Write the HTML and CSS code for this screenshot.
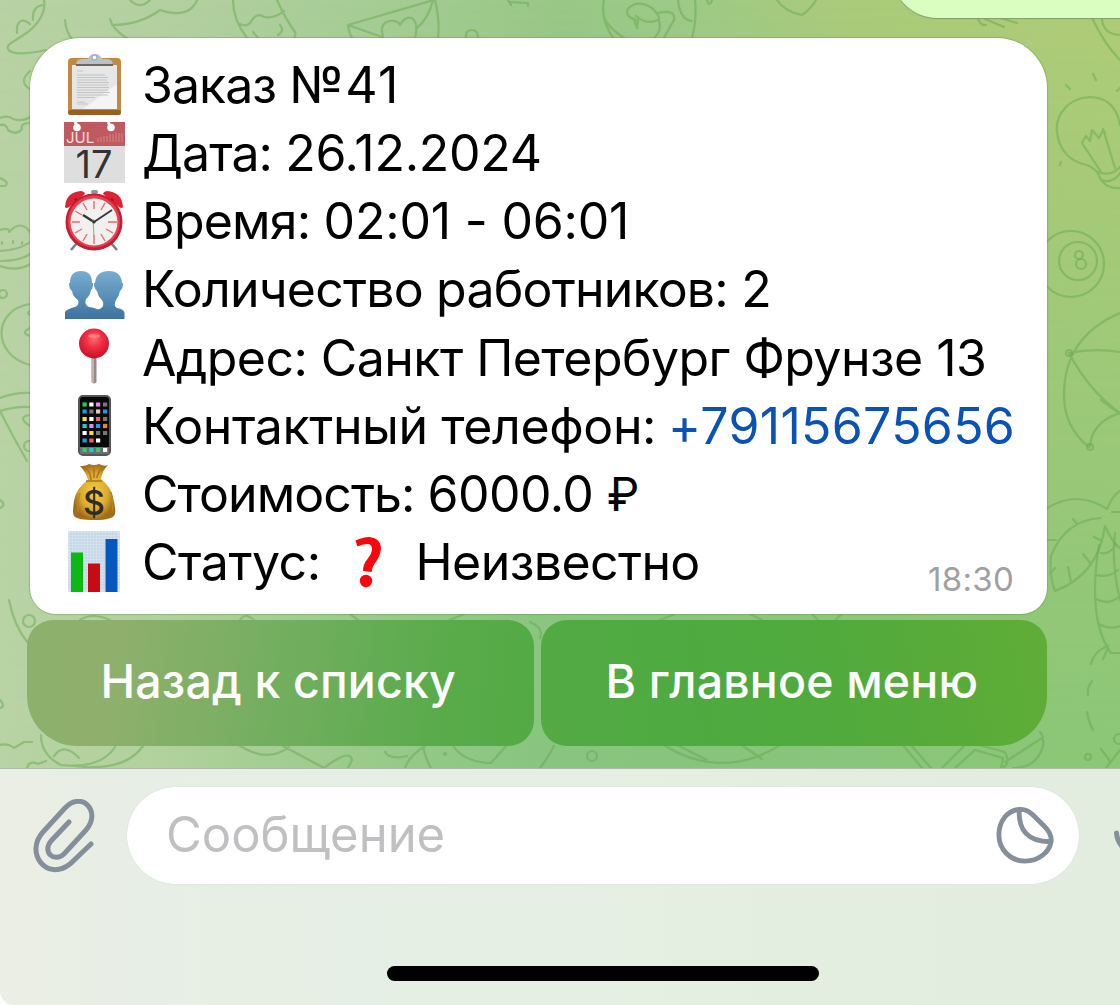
FILE: index.html
```
<!DOCTYPE html>
<html lang="ru">
<head>
<meta charset="utf-8">
<title>Заказ №41</title>
<link rel="stylesheet" href="styles.css">
</head>
<body>
<div class="app">
  <main class="chat">
    <svg class="pattern" viewBox="0 0 1120 768" aria-hidden="true">
      <!-- top edge -->
      <path d="M44 0C46 12 40 22 28 32C14 42 6 44 8 49C11 55 28 54 46 50M43 5q-11 1-10 15M30 24q-10-8-13 3v6M65 20q1 12 7 19M110 19q2 10 18 20M112 25q28 0 48-15q30 10 38-12M130 0q10 10 20 0"/>
      <path d="M233 0q0 20 14 38M277 0q8 18 18 32q1 4-1 6M240 24q8 4 12-4q6-8 12-3q10 2 20-6M280 25q5 6-2 10M253 32l6 7"/>
      <path d="M434 0L348 25L382 37M348 25q1 8 4 13M433 0q-4 18-17 29M435 0q5 20 3 38M383 37q-4-14 7-16q8-1 10 4q5-9 12-7q7 6 3 20M466 38q-1-8 6-8q6 0 6 8M508 0l3 5M510 2l18 1v3"/>
      <path d="M604 0q-4 18 9 38M604 18q5 10 20 20M636 20q-12-4-8-11q8-10 24-1q12 12 3 13q-10 3-19-5M634 20l3 8 1-8M658 13q18-4 16 7q-6 10-10 18M654 38q8-7 5-17M695 0q2 20-3 38M678 0q2 20 14 21M707 0q2 8 5 0M777 0q8 12 25 15q8-5 14-15M978 19q3 7 8 6M985 19l19 8M1000 18l17 5"/>
      <!-- right edge -->
      <path d="M1092 18Q1105 45 1120 60M1102 19q1 15 18 16M1066 85l4 4M1093 74l3 6M1061 162l-1 3M1117 91l3-3"/>
      <path d="M1120 125C1117 106 1105 97 1090 97C1068 98 1055 115 1057 132C1059 150 1070 162 1087 165Q1097 169 1100 178Q1106 189 1120 188M1101 172L1082 143L1086 136L1090 141L1092 130L1099 138L1103 130L1105 134L1103 129L1115 168M1098 172q13 5 22-5M1101 180q12 4 19-7"/>
      <circle cx="1071" cy="264" r="33"/><circle cx="1078" cy="261" r="19"/><circle cx="1079" cy="255" r="4"/><circle cx="1081" cy="264" r="5"/>
      <path d="M1120 313C1080 330 1064 360 1064 395C1064 420 1075 436 1089 447M1069 353q25-5 51-1M1069 353q20 38 51 60M1090 446q2-24 30-33M1101 400l19 14"/>
      <circle cx="1069" cy="353" r="3"/><circle cx="1090" cy="447" r="3"/>
      <path d="M1046 509q30-20 61 0q6-14 13-18M1101 518q-36 2-50 38q-2 20 4 35q43-16 50-65q8 18 15 22M1112 512h8M1046 540h10M1073 519l4 5M1094 537l8 4M1083 554l8 10M1068 567l3 15M1055 568l-5 6"/>
      <path d="M1099 545q-12 75 12 108h9M1115 533q-4 30 5 67M1101 553q9 2 15-9M1096 575q13 3 22-5M1096 599q12 7 24-3M1099 624q10 6 21 2M1108 646q-14 5-17 18M1108 648l-5 11M1092 681q-5 6-4 14M1087 712q1 8 6 18M1101 749l9 12M1120 750l-14 18"/>
      <circle cx="1088" cy="757" r="3"/><circle cx="1119" cy="739" r="5"/>
      <!-- left edge -->
      <path d="M30 71q-12 11 0 18M0 118q9-3 13 1q10 3 17-2M0 125q6-2 8 5q8 6 14-1q-2-6 8-6M0 178q10 4 5 8h-5M0 230q10-3 9 2q12-13 21 0M2 242v2M13 241v2M22 242v2M0 251q20-1 30-9M0 261q20 0 30-7M0 266q18 6 30-2M30 304C-8 310-8 355 30 365M30 311q-4 2 0 4M30 328q-10 5 0 8M0 398q16-6 30-5M0 411q16-5 30-4M0 411q12 24 27 50M30 415q-14 2 0 11M0 500q7 5 0 8"/>
      <circle cx="3" cy="294" r="4"/><circle cx="29" cy="446" r="5"/>
      <path d="M9 600q5 26 19 43M0 700q6 7 0 8M0 745q8-2 14 3l10-6h8M27 768q2-8 11-4l8-3M41 735q0 20 20 30q40 4 54-18M54 756q10-14 25 2M75 766q50 6 68-20"/>
      <circle cx="29" cy="621" r="6"/>
      <!-- bottom strip -->
      <path d="M237 744q30 20 52 3M283 746l41 22q26-20 28-8q-2 4-4 8M385 752q5 8 22 4M405 768q4-12 20-22M423 746q2 12 8 22M452 744q10 18 39 19l16-18M540 768q8-10 14-22M662 744q60 38 120 0M675 744l32 16M740 744l22 15M902 744l20 24M910 744l21 24M942 768l24-24M955 768l20-18 28 8-2 10M975 744l30 8q6 12-3 16M1040 732q4 4 3 14q-6 22-30 22M1005 762l37-24"/>
      <circle cx="592" cy="756" r="5"/><circle cx="445" cy="754" r="1"/>
      <path d="M80 620q12-8 30 0M240 620q5-8 14 0M350 614l8 6M450 620l14-6M530 622q14 6 10 16M660 620l15-6M750 614l12 6M812 614l6 6M835 620l6-5"/>
    </svg>

    <div class="outgoing"></div>

    <section class="message">
      <div class="row">
        <svg class="emoji" viewBox="0 0 62 62">
          <rect x="5" y="4" width="53" height="57" rx="4" fill="#c28a3e"/><rect x="5" y="56" width="53" height="5" rx="2.500" fill="#966021"/>
          <rect x="9" y="11" width="45" height="44" fill="#e6e6e6"/><path d="M20 55h34V30z" fill="#f4f4f4"/>
          <path d="M14 17h6M14 21h28M14 23.500h31M14 26h30M14 28.500h32M14 31h31M14 33.500h32M14 36h31M14 38.500h33M14 41h31M14 43.500h18M14 48h8M14 50h11" stroke="#c4c4c4" stroke-width="1"/>
          <path d="M13 11q0-6 6-6h6q2-5 7-5t7 5h5q6 0 6 6z" fill="#bcc0c6"/><path d="M13 10h37v2H13z" fill="#6c6763"/><circle cx="31.500" cy="3.500" r="2.500" fill="#fff" stroke="#9fb0c4" stroke-width="1.500"/>
        </svg>
        <span class="line w1">Заказ </span><span class="line w2">№41</span>
      </div>
      <div class="row">
        <svg class="emoji" viewBox="0 0 62 62">
          <path d="M1 0h61v61H1z" fill="#dedede"/><path d="M1 0h61v24H1z" fill="#bf5a60"/>
          <circle cx="14" cy="5.500" r="3.800" fill="#fff"/><circle cx="48" cy="5.500" r="3.800" fill="#fff"/><path d="M12 0l3 5M45 0l3 5" stroke="#fff" stroke-width="3"/>
          <path d="M35 20v-4M38 20v-5M41 20v-6M44 20v-6M47 20v-8M50 20v-8M53 20v-9M56 20v-9M59 20v-9" stroke="#d5868a"/>
          <text x="3" y="20.500" class="cal-month">JUL</text><text x="31" y="55.500" class="cal-day">17</text>
        </svg>
        <span class="line w1">Дата: </span><span class="line w3">26.12.2024</span>
      </div>
      <div class="row">
        <svg class="emoji" viewBox="0 0 62 62">
          <path d="M14 53l-6 7M48 53l6 7" stroke="#777f8b" stroke-width="2.500"/>
          <path d="M2 17Q3 2 18 1q4 1 4 3L6 17q-3 2-4 0M60 17Q59 2 44 1q-4 1-4 3l16 13q3 2 4 0" fill="#dc2336"/><path d="M12 9l5 5M50 9l-5 5" stroke="#8d1624" stroke-width="3"/>
          <rect x="28" y="0" width="7" height="4" rx="2" fill="#92969b"/>
          <circle cx="31" cy="32" r="28.500" fill="#c81d30"/><circle cx="31" cy="31.500" r="26" fill="#e54251"/><circle cx="31" cy="32" r="23.500" fill="#f0f0ef"/>
          <path d="M31 11v8M31 45v9M9 32h8M45 32h9M20 13l4 7M42 13l-4 7M12 21l7 4M50 43l-7-4M12 43l7-4M20 51l4-7M42 51l-4-7" stroke="#ed6870" stroke-width="1.400"/>
          <path d="M31 32L20 25" stroke="#30383a" stroke-width="2.500"/><path d="M31 32L49 20" stroke="#30383a" stroke-width="1.800"/><path d="M30 29l1 17" stroke="#b69b70"/><circle cx="31" cy="32" r="1.500" fill="#333"/>
        </svg>
        <span class="line w4">Время: </span><span class="line w5">02:01 - 06:01</span>
      </div>
      <div class="row">
        <svg class="emoji" viewBox="0 0 62 62">
          <defs>
            <linearGradient id="people" x1="0" y1="0" x2="0" y2="1"><stop stop-color="#78aed1"/><stop offset="1" stop-color="#3e729e"/></linearGradient>
          </defs>
          <path d="M32 61L30 53Q39 51 40 48Q41 44 38 41Q35 38 34 33Q31 31 31 25H32Q33 13 46 13Q58 13 59 25H60Q60 31 57 33Q56 38 53 42Q50 48 54 50Q61 51 61.500 55V61Z" fill="url(#people)"/>
          <path d="M2 61V54q2-3 10-5q5-2 3-7q-5-3-6-9q-3-2-3-8h1q0-12 11-12t11 12h1q0 6-2 7q-1 6-5 9q-2 6 3 8q10 1 12 6q1 3 1 6z" fill="url(#people)"/>
        </svg>
        <span class="line w4">Количество работников: 2</span>
      </div>
      <div class="row">
        <svg class="emoji" viewBox="0 0 62 62">
          <defs><radialGradient id="pin" cx=".5" cy=".35" r=".65"><stop stop-color="#ff6a70"/><stop offset=".45" stop-color="#ee2e43"/><stop offset="1" stop-color="#c90e27"/></radialGradient></defs>
          <path d="M28.500 28h5v27q-2.500 3-5 0z" fill="#988783"/><path d="M30 29v27" stroke="#c9c0bc" stroke-width="1.500"/><circle cx="31" cy="16.500" r="15" fill="url(#pin)"/><ellipse cx="31" cy="9" rx="6" ry="2" fill="#ff989b" opacity=".6"/>
        </svg>
        <span class="line w6">Адрес: Санкт Петербург Фрунзе 13</span>
      </div>
      <div class="row">
        <svg class="emoji" viewBox="0 0 62 62">
          <rect x="16" y="1" width="31" height="59" rx="4" fill="#090909" stroke="#555" stroke-width="2"/><path d="M17 52h29v7H17z" fill="#6c6e70"/>
          <g stroke-width="4.200">
            <path d="M19.500 9.500h4.200" stroke="#21cf50"/><path d="M26.300 9.500h4.200M26.300 24h4.200M19.500 38h4.200M33 45.500h4.200M40 55h4.200" stroke="#fff"/>
            <path d="M33 9.500h4.200M26.300 31h4.200" stroke="#e08fe0"/><path d="M40 9.500h4.200M26.300 16.500h4.200M40 24h4.200M33 38h4.200M40 38h4.200" stroke="#777"/>
            <path d="M19.500 16.500h4.200M40 16.500h4.200M33 31h4.200M19.500 45.500h4.200" stroke="#199bea"/><path d="M19.500 31h4.200M26.300 55h4.200" stroke="#21c9d7"/>
            <path d="M19.500 24h4.200M26.300 38h4.200" stroke="#f6dc40"/><path d="M33 16.500h4.200" stroke="#dfc7a6"/><path d="M33 24h4.200M26.300 45.500h4.200" stroke="#f16050"/><path d="M40 31h4.200" stroke="#f0861e"/><path d="M19.500 55h4.200M33 55h4.200" stroke="#34ce60"/>
          </g>
        </svg>
        <span class="line w7">Контактный телефон:</span><a class="line phone">+79115675656</a>
      </div>
      <div class="row">
        <svg class="emoji" viewBox="0 0 62 62">
          <defs><radialGradient id="bag"><stop stop-color="#f4cf48"/><stop offset=".65" stop-color="#dda92e"/><stop offset="1" stop-color="#a16d1b"/></radialGradient></defs>
          <path d="M17 3q6 0 9-2 5 2 10 0 5 3 9 1-6 6-7 14 10 8 12 19 3 10 2 16-2 6-20 6T11 53q-2-2 0-15 2-13 14-21-2-8-8-14" fill="url(#bag)"/>
          <path d="M23 5q5 5 5 12M31 4v11M39 5q-5 6-5 10M23 18h16" stroke="#a8761f" stroke-width="1.500" fill="none"/><path d="M17 30q-3 9-2 19M48 29q3 9 1 19" stroke="#b98523" stroke-width="1.300" fill="none"/>
          <text x="31" y="51.500" class="dollar">$</text>
        </svg>
        <span class="line w1">Стоимость: </span><span class="line w6">6000.0 </span><span class="line ruble">₽</span>
      </div>
      <div class="row">
        <svg class="emoji" viewBox="0 0 62 62">
          <path d="M5 0h52v61H5z" fill="#d8e7f2"/><path d="M8 0v61M11 0v61M14 0v61M17 0v61M20 0v61M23 0v61M26 0v61M29 0v61M32 0v61M35 0v61M38 0v61M41 0v61M44 0v61M47 0v61M50 0v61M53 0v61M5 3h52M5 6h52M5 9h52M5 12h52M5 15h52M5 18h52M5 21h52M5 24h52M5 27h52M5 30h52M5 33h52M5 36h52M5 39h52M5 42h52M5 45h52M5 48h52M5 51h52M5 54h52M5 57h52" stroke="#b9cbdc" stroke-width=".6"/>
          <path d="M8 21.500h12V61H8z" fill="#0bb814"/><path d="M25 32.500h12V61H25z" fill="#c60b12"/><path d="M42.500 8h12v53h-12z" fill="#0758bd"/>
        </svg>
        <span class="line">Статус:</span>
        <svg class="question" viewBox="0 0 28 52"><path d="M1.500 4.500Q9 1 15 1Q27 2 27 13Q26 21 21 27Q18 31 17.500 36L9 35Q9 28 13.500 23Q18 17 18 13Q18 8 13 8Q8 8 3.500 10.500Z" fill="#f8080c"/><circle cx="12" cy="45" r="6.200" fill="#f8080c"/></svg>
        <span class="line w8">Неизвестно</span>
        <time class="time">18:30</time>
      </div>
    </section>

    <div class="keyboard">
      <button class="key key-back"><span>Назад к списку</span></button>
      <button class="key key-menu"><span>В главное меню</span></button>
    </div>
  </main>

  <footer class="panel">
    <div class="composer">
      <svg class="clip" viewBox="0 0 64 74"><path d="M37 23L19 42C10 53 22 64 32 55L54 31C70 13 50-9 33 9L11 33C-8 54 15 83 38 65L59 45"/></svg>
      <div class="field">
        <span class="placeholder">Сообщение</span>
        <svg class="sticker" viewBox="0 0 60 60"><path d="M24 3.500C11 5 3 16 3 30C3 45 15 57 30 57C44 57 55 48 57 37C58 30 54 25 50 21L38 9C34 5 29 3 24 3.500ZM24 4C23 25 33 37 56 37"/></svg>
      </div>
      <svg class="mic" viewBox="0 0 8 40"><path d="M4.500 17Q5 25 12 33"/></svg>
    </div>
    <div class="home"></div>
  </footer>
</div>
</body>
</html>
```
FILE: styles.css
```
* { box-sizing: border-box; }
body { margin: 0; background: #fff; font-family: Inter, "Liberation Sans", sans-serif; }
.app { width: 1120px; height: 1005px; overflow: hidden; display: flex; flex-direction: column; border-bottom-left-radius: 14px; }

.chat {
  position: relative;
  height: 768px;
  padding: 38px 73px 0 27px;
  background: linear-gradient(90deg, #b9d2a4 0, #b1d09f 200px, #a2cb91 430px, #99c886 560px, #9dca88 680px, #abcb7a 850px, #b0cc78 1120px);
}
.chat::before {
  content: "";
  position: absolute;
  inset: 0;
  background: linear-gradient(90deg, #b9d3a4 0, #b1d19d 160px, #9bcb8c 350px, #88c57f 540px, #87c57c 700px, #8dc677 1120px);
  -webkit-mask-image: linear-gradient(transparent, #000 95%);
  mask-image: linear-gradient(transparent, #000 95%);
}
.pattern { position: absolute; inset: 0; fill: none; stroke: #67a851; stroke-opacity: .5; stroke-width: 2.2; stroke-linecap: round; stroke-linejoin: round; }
.outgoing { position: absolute; top: -72px; left: 892px; width: 300px; height: 90px; border-radius: 50px; background: #d9fec0; box-shadow: 0 1px 1px #7fa06a; }

.message { position: relative; width: 1017px; height: 576px; margin-left: 3px; padding: 13px 33px 0; background: #fff; border-radius: 50px 50px 26px 26px; box-shadow: 0 0 1px 1px rgba(90, 140, 70, .35); }
.row { display: flex; align-items: center; height: 68.15px; }
.emoji { flex: none; width: 62px; height: 62px; margin: 0 17.5px 0 -.5px; }
.line { font-size: 50px; line-height: 68px; white-space: pre; color: #000; letter-spacing: -.5px; }
.w1 { letter-spacing: -.95px; }
.w2 { letter-spacing: 1.4px; }
.w3 { letter-spacing: -.25px; }
.w4 { letter-spacing: -.8px; }
.w5 { letter-spacing: -.2px; }
.w6 { letter-spacing: -.55px; }
.w7 { letter-spacing: -.4px; }
.w8 { letter-spacing: -.6px; }
.ruble { font-size: 46px; }
.phone { margin-left: 12px; letter-spacing: .3px; color: #0a52b4; }
.question { width: 28px; height: 52px; margin: 0 34px 0 33px; }
.time { margin-left: auto; padding-top: 33px; font-size: 33px; line-height: 40px; letter-spacing: .3px; color: #a0a0a2; }
.cal-month { font: 400 15px Inter, sans-serif; fill: #f8dfe0; }
.cal-day { font: 400 38px Inter, sans-serif; fill: #333; text-anchor: middle; }
.dollar { font: 500 34px Inter, sans-serif; fill: #302d27; text-anchor: middle; }

.keyboard { position: relative; display: flex; gap: 7px; margin-top: 6px; }
.key { flex: 1; height: 126px; padding: 0 0 5px; border: 0; color: #fff; font: 500 46.5px Inter, "Liberation Sans", sans-serif; letter-spacing: .15px; white-space: nowrap; }
.key-back { padding-right: 4px; border-radius: 26px 26px 26px 50px; background: linear-gradient(97deg, #8eb06e 0, #8eb06c 18%, #70ae5e 53%, #5aab4b 80%, #53aa44 100%); }
.key-menu { padding-right: 4px; border-radius: 26px 26px 50px 26px; background: linear-gradient(80deg, #54aa46 0, #4eaa40 32%, #51aa3c 60%, #60ad37 100%); }

.panel { flex: 1; display: flex; flex-direction: column; align-items: center; border-top: 1px solid #aebbaa; background: linear-gradient(90deg, #ebeee4 0, #e8eee5 130px, #e5efe4 400px, #e4eee0 800px, #e2eddf 1120px); }
.composer { display: flex; align-items: center; width: 1120px; padding-top: 18px; }
.clip { width: 64px; height: 74px; margin: 0 31px 0 32px; fill: none; stroke: #858e9b; stroke-width: 5; stroke-linecap: round; }
.field { width: 952px; height: 97px; padding: 0 25px 2px 39px; display: flex; align-items: center; justify-content: space-between; border-radius: 49px; background: #fff; box-shadow: 0 0 1px #c4cdc2; }
.placeholder { font-size: 49px; color: #c0c0c2; }
.sticker { width: 58px; height: 58px; fill: none; stroke: #858e9b; stroke-width: 5; stroke-linecap: round; stroke-linejoin: round; }
.mic { width: 8px; height: 40px; margin-left: 33px; fill: none; stroke: #858e9b; stroke-width: 5; stroke-linecap: round; }
.home { width: 432px; height: 15px; margin: 82px 0 0 86px; border-radius: 8px; background: #000; }
```
